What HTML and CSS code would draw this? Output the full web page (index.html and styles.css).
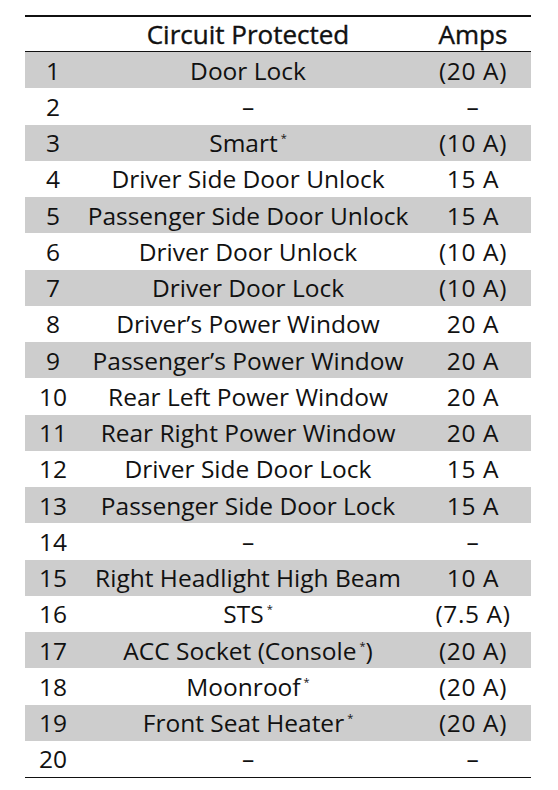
FILE: index.html
```html
<!DOCTYPE html>
<html>
<head>
<meta charset="utf-8">
<link rel="stylesheet" href="styles.css">
</head>
<body>
<table class="fuse">
  <thead>
    <tr><th class="num"></th><th class="circ">Circuit Protected</th><th class="amp">Amps</th></tr>
  </thead>
  <tbody>
    <tr class="g"><td class="num">1</td><td class="circ">Door Lock</td><td class="amp">(20 A)</td></tr>
    <tr><td class="num">2</td><td class="circ">–</td><td class="amp">–</td></tr>
    <tr class="g"><td class="num">3</td><td class="circ">Smart<sup>*</sup></td><td class="amp">(10 A)</td></tr>
    <tr><td class="num">4</td><td class="circ">Driver Side Door Unlock</td><td class="amp">15 A</td></tr>
    <tr class="g"><td class="num">5</td><td class="circ">Passenger Side Door Unlock</td><td class="amp">15 A</td></tr>
    <tr><td class="num">6</td><td class="circ">Driver Door Unlock</td><td class="amp">(10 A)</td></tr>
    <tr class="g"><td class="num">7</td><td class="circ">Driver Door Lock</td><td class="amp">(10 A)</td></tr>
    <tr><td class="num">8</td><td class="circ">Driver’s Power Window</td><td class="amp">20 A</td></tr>
    <tr class="g"><td class="num">9</td><td class="circ">Passenger’s Power Window</td><td class="amp">20 A</td></tr>
    <tr><td class="num">10</td><td class="circ">Rear Left Power Window</td><td class="amp">20 A</td></tr>
    <tr class="g"><td class="num">11</td><td class="circ">Rear Right Power Window</td><td class="amp">20 A</td></tr>
    <tr><td class="num">12</td><td class="circ">Driver Side Door Lock</td><td class="amp">15 A</td></tr>
    <tr class="g"><td class="num">13</td><td class="circ">Passenger Side Door Lock</td><td class="amp">15 A</td></tr>
    <tr><td class="num">14</td><td class="circ">–</td><td class="amp">–</td></tr>
    <tr class="g"><td class="num">15</td><td class="circ">Right Headlight High Beam</td><td class="amp">10 A</td></tr>
    <tr><td class="num">16</td><td class="circ">STS<sup>*</sup></td><td class="amp">(7.5 A)</td></tr>
    <tr class="g"><td class="num">17</td><td class="circ">ACC Socket (Console<sup>*</sup>)</td><td class="amp">(20 A)</td></tr>
    <tr><td class="num">18</td><td class="circ">Moonroof<sup>*</sup></td><td class="amp">(20 A)</td></tr>
    <tr class="g"><td class="num">19</td><td class="circ">Front Seat Heater<sup>*</sup></td><td class="amp">(20 A)</td></tr>
    <tr><td class="num">20</td><td class="circ">–</td><td class="amp">–</td></tr>
  </tbody>
</table>
</body>
</html>
```
FILE: styles.css
```css
html, body {
  margin: 0;
  padding: 0;
  background: #ffffff;
}
body {
  padding: 15px 0 0 25px;
  font-family: "Open Sans", "Noto Sans", "DejaVu Sans", sans-serif;
  color: #111;
}
.fuse {
  width: 506px;
  border-collapse: collapse;
  table-layout: fixed;
  border-top: 2px solid #111;
  border-bottom: 1.5px solid #111;
}
.fuse thead th {
  height: 34px;
  padding: 0;
  font-weight: 400;
  font-size: 26px;
  line-height: 33px;
  -webkit-text-stroke: 0.4px #111;
  border-bottom: 1.5px solid #111;
  text-align: center;
}
.fuse td {
  height: 36.25px;
  padding: 0;
  font-size: 24.5px;
  font-weight: 400;
  line-height: 35px;
  text-align: center;
  white-space: nowrap;
}
.fuse td.amp {
  letter-spacing: 0.6px;
}
.fuse tr.g td {
  background: #cdcdcd;
}
.num { width: 56px; }
.circ { width: 334px; }
.amp { width: 116px; }
sup {
  font-size: 11px;
  vertical-align: top;
  line-height: 1;
  position: relative;
  top: 7px;
  margin-left: 3px;
}
```
